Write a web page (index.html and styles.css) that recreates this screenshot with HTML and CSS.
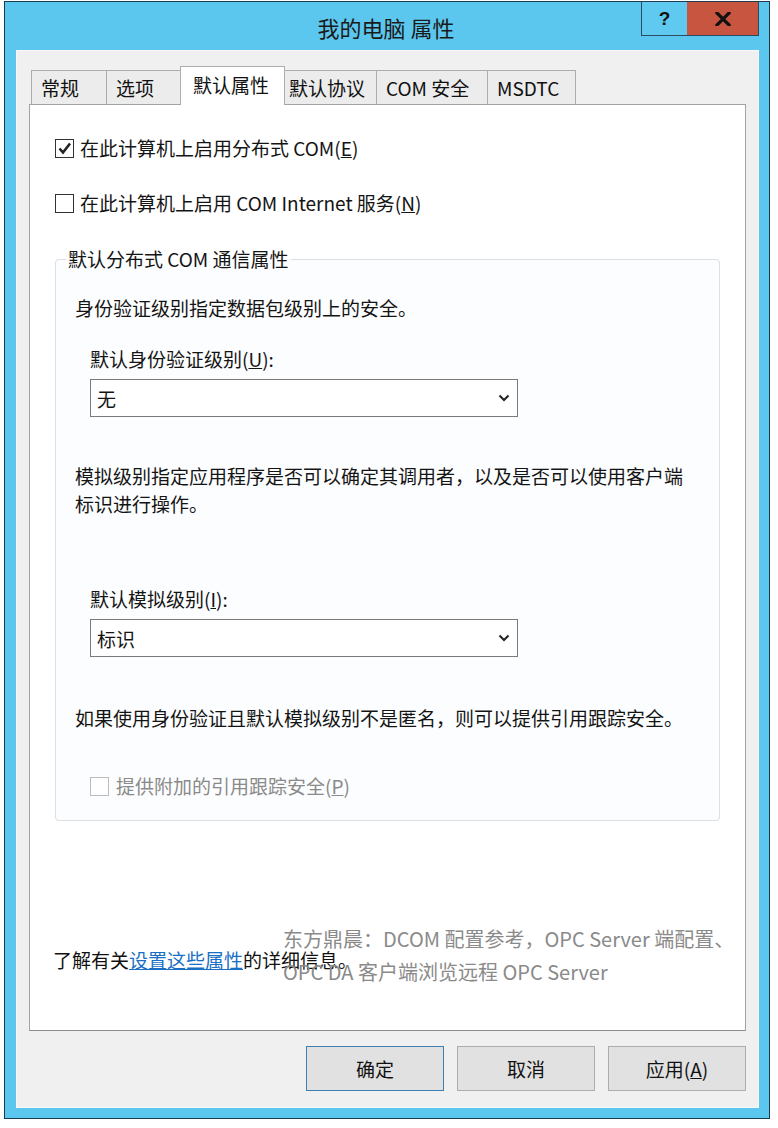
FILE: index.html
```html
<!DOCTYPE html>
<html lang="zh-CN">
<head>
<meta charset="utf-8">
<title>我的电脑 属性</title>
<link rel="stylesheet" href="styles.css">
</head>
<body>
<div class="window">
  <div class="titlebar">
    <div></div>
    <div class="title">我的电脑 属性</div>
    <div class="caption">
      <div class="cap-btn cap-help">?</div>
      <div class="cap-btn cap-close">
        <svg width="16" height="14" viewBox="0 0 16 14"><path d="M2 1 L14 13 M14 1 L2 13" stroke="#111" stroke-width="3.2" stroke-linecap="square"/></svg>
      </div>
    </div>
  </div>
  <div class="client">
    <div class="tabs">
      <div class="tab w76">常规</div>
      <div class="tab w76">选项</div>
      <div class="tab tab-sel">默认属性</div>
      <div class="tab w95 tab-tight">默认协议</div>
      <div class="tab w112">COM 安全</div>
      <div class="tab w89">MSDTC</div>
    </div>
    <div class="panel">
      <div class="check-row">
        <span class="box checked"><svg width="17" height="17" viewBox="0 0 17 17"><path d="M3.5 8.5 L7 12.5 L14 3.5" fill="none" stroke="#222" stroke-width="2.6"/></svg></span>
        <span>在此计算机上启用分布式 COM(<u>E</u>)</span>
      </div>
      <div class="check-row row2">
        <span class="box"></span>
        <span>在此计算机上启用 COM Internet 服务(<u>N</u>)</span>
      </div>
      <fieldset class="group">
        <legend>默认分布式 COM 通信属性</legend>
        <p class="text">身份验证级别指定数据包级别上的安全。</p>
        <div class="label lbl-u">默认身份验证级别(<u>U</u>):</div>
        <div class="combo">
          <span>无</span>
          <svg width="12" height="8" viewBox="0 0 12 8"><path d="M1.5 1.5 L6 6 L10.5 1.5" fill="none" stroke="#222" stroke-width="2"/></svg>
        </div>
        <p class="text para">模拟级别指定应用程序是否可以确定其调用者，以及是否可以使用客户端标识进行操作。</p>
        <div class="label lbl-i">默认模拟级别(<u>I</u>):</div>
        <div class="combo">
          <span>标识</span>
          <svg width="12" height="8" viewBox="0 0 12 8"><path d="M1.5 1.5 L6 6 L10.5 1.5" fill="none" stroke="#222" stroke-width="2"/></svg>
        </div>
        <p class="text note">如果使用身份验证且默认模拟级别不是匿名，则可以提供引用跟踪安全。</p>
        <div class="check-row disabled">
          <span class="box"></span>
          <span>提供附加的引用跟踪安全(<u>P</u>)</span>
        </div>
      </fieldset>
      <p class="more">了解有关<a class="link" href="#">设置这些属性</a>的详细信息。</p>
      <div class="watermark">东方鼎晨：DCOM 配置参考，OPC Server 端配置、<br>OPC DA 客户端浏览远程 OPC Server</div>
    </div>
    <div class="buttons">
      <div class="btn btn-default">确定</div>
      <div class="btn">取消</div>
      <div class="btn">应用(<u>A</u>)</div>
    </div>
  </div>
</div>
</body>
</html>
```

FILE: styles.css
```css
* { box-sizing: border-box; }

html, body {
  margin: 0;
  padding: 0;
  background: #ffffff;
}

body {
  font-family: "Noto Sans CJK SC", "Microsoft YaHei", sans-serif;
  font-size: 19px;
  color: #141414;
}

.window {
  margin: 1px 0 0 4px;
  width: 766px;
  height: 1118px;
  border: 1px solid #1f3b4f;
  background: #5cc7ee;
  display: flex;
  flex-direction: column;
}

.titlebar {
  height: 48px;
  display: grid;
  grid-template-columns: 1fr auto 1fr;
  align-items: start;
}

.title {
  font-size: 22px;
  line-height: 50px;
  color: #1a1a1a;
  padding-right: 2px;
}

.caption {
  justify-self: end;
  display: flex;
  margin-right: 10px;
  border: 1px solid #2a4c63;
  border-top: none;
}

.cap-btn {
  height: 33px;
  display: flex;
  align-items: center;
  justify-content: center;
}

.cap-help {
  width: 45px;
  font-family: "Liberation Sans", sans-serif;
  font-weight: bold;
  font-size: 19px;
  color: #111;
  background: #5fc9f0;
}

.cap-close {
  width: 71px;
  background: #c8553f;
}

.client {
  margin: 0 10px 10px 11px;
  height: 1058px;
  background: #f0f0f0;
  border: 1px solid #f8f8f8;
  padding: 15px 12px 16px 12px;
  display: flex;
  flex-direction: column;
}

.tabs {
  display: flex;
  align-items: flex-end;
  padding-left: 2px;
  height: 38px;
  position: relative;
  z-index: 1;
}

.tab {
  height: 34px;
  border: 1px solid #adadad;
  border-bottom: none;
  background: #ececec;
  margin-right: -1px;
  padding-left: 9px;
  font-size: 19px;
  line-height: 33px;
  white-space: nowrap;
  color: #111;
}

.w76 { width: 76px; }
.w95 { width: 95px; }
.w112 { width: 112px; }
.w89 { width: 89px; }
.tab-tight { padding-left: 6px; }

.tab-sel {
  width: 105px;
  height: 39px;
  margin-left: -1px;
  margin-right: -3px;
  margin-bottom: -1px;
  background: #ffffff;
  padding-left: 12px;
  line-height: 36px;
  position: relative;
  z-index: 2;
}

.panel {
  position: relative;
  flex: 1;
  background: #ffffff;
  border: 1px solid #a3a3a3;
  border-bottom-color: #8c8c8c;
  padding: 29px 25px 0 25px;
  display: flex;
  flex-direction: column;
  align-items: flex-start;
}

.check-row {
  display: flex;
  align-items: center;
  height: 28px;
  line-height: 28px;
  white-space: nowrap;
}

.row2 { margin-top: 27px; }

.box {
  width: 19px;
  height: 19px;
  border: 1px solid #333;
  background: #fff;
  margin-right: 6px;
  display: flex;
  align-items: center;
  justify-content: center;
}

.disabled {
  color: #8a8a8a;
  margin-left: 15px;
  margin-top: 40px;
}

.disabled .box {
  border-color: #bcbcbc;
  margin-right: 7px;
}

.group {
  align-self: stretch;
  margin: 28px 0 0 0;
  border: 1px solid #dcdfe3;
  border-radius: 4px;
  padding: 21px 19px 20px 19px;
  background: #fcfdfe;
}

.group legend {
  margin-left: -9px;
  padding: 0 2px;
  line-height: 28px;
  font-size: 19px;
}

.text {
  margin: 0;
  line-height: 28px;
}

.label {
  margin-left: 15px;
  line-height: 28px;
}

.lbl-u { margin-top: 23px; }
.lbl-i { margin-top: 67px; }

.combo {
  margin: 6px 0 0 15px;
  width: 428px;
  height: 38px;
  border: 1px solid #7a7a7a;
  background: #fff;
  display: flex;
  align-items: center;
  justify-content: space-between;
  padding: 0 7px 0 6px;
}

.para { margin-top: 45px; }
.note { margin-top: 47px; }

.more {
  margin: 125px 0 0 -2px;
  line-height: 28px;
  white-space: nowrap;
  color: #111;
}

.link {
  color: #1a6fc4;
  text-decoration: underline;
}

.watermark {
  position: absolute;
  left: 253px;
  top: 817px;
  font-size: 20px;
  line-height: 33px;
  color: #8a8a8a;
  white-space: nowrap;
}

.buttons {
  display: flex;
  justify-content: flex-end;
  gap: 13px;
  margin-top: 15px;
}

.btn {
  width: 138px;
  height: 45px;
  border: 1px solid #adadad;
  background: #e1e1e1;
  display: flex;
  align-items: center;
  justify-content: center;
  font-size: 19px;
  color: #111;
}

.btn-default {
  border-color: #3d7fb3;
}
```
